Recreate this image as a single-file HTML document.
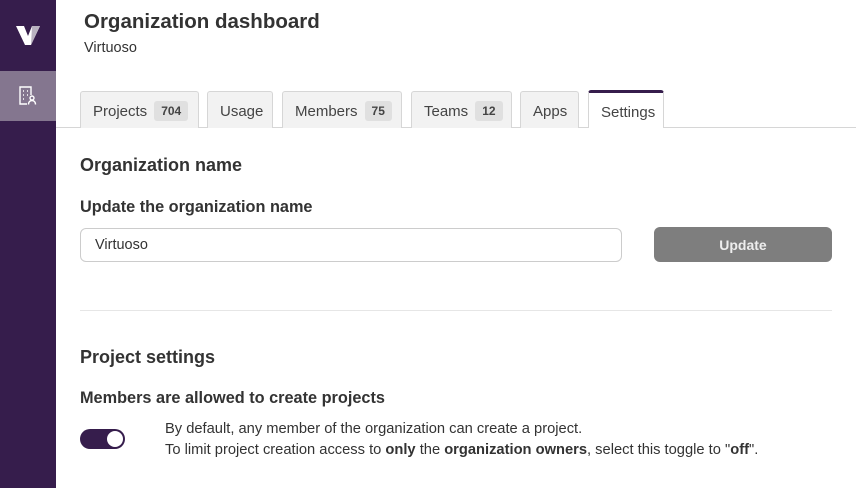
<!DOCTYPE html>
<html><head><style>
*{box-sizing:border-box;margin:0;padding:0}
body{width:856px;height:488px;overflow:hidden;background:#fff;font-family:"Liberation Sans",sans-serif;color:#333;position:relative}
.side{position:absolute;left:0;top:0;width:56px;height:488px;background:#361d4c}
.act{position:absolute;left:0;top:71px;width:56px;height:50px;background:#84768f}
.abs{position:absolute}
.tab{position:absolute;top:91px;height:37px;border:1px solid #d6d6d6;border-bottom:none;background:#f2f2f2;border-radius:3px 3px 0 0;font-size:15px;color:#444;padding-left:12px;line-height:40px}
.badge{display:inline-block;background:#e0e0e0;border-radius:3px;font-size:12px;font-weight:bold;padding:0 7px;line-height:20px;margin-left:7px;vertical-align:1px}
h2{font-size:18px;font-weight:bold;color:#333}
h3{font-size:16.3px;font-weight:bold;color:#333}
</style></head><body>
<div class="side"></div>
<div class="act"></div>
<svg class="abs" style="left:16px;top:26px" width="24" height="20" viewBox="0 0 24 20"><path d="M0 0h8l4 10 4-10h8l-9 19h-6z" fill="#fff"/><path d="M16 0h8l-9 19z" fill="#b9b2c0"/></svg>
<svg class="abs" style="left:19px;top:86px" width="19" height="20" viewBox="0 0 19 20" fill="none" stroke="#fff" stroke-width="1.4"><path d="M8 18H1V1h11v8"/><path d="M4 5h1M8 5h1M4 9h1M8 9h1M4 13h1"/><circle cx="13" cy="12" r="2"/><path d="M9.5 18.5c0-3 2-4 3.5-4s3.5 1 3.5 4"/></svg>
<div class="abs" style="left:84px;top:10px;font-size:20.5px;font-weight:bold;color:#333">Organization dashboard</div>
<div class="abs" style="left:84px;top:40px;font-size:14.5px;color:#333">Virtuoso</div>
<div class="abs" style="left:56px;top:127px;width:800px;height:1px;background:#d6d6d6"></div>
<div class="tab" style="left:80px;width:119px">Projects<span class="badge">704</span></div>
<div class="tab" style="left:207px;width:66px">Usage</div>
<div class="tab" style="left:282px;width:120px">Members<span class="badge">75</span></div>
<div class="tab" style="left:411px;width:101px">Teams<span class="badge">12</span></div>
<div class="tab" style="left:520px;width:59px">Apps</div>
<div class="tab" style="left:588px;top:90px;width:76px;height:38px;background:#fff;border-top:3px solid #361d4c">Settings</div>
<h2 class="abs" style="left:80px;top:155px">Organization name</h2>
<h3 class="abs" style="left:80px;top:198px">Update the organization name</h3>
<div class="abs" style="left:80px;top:228px;width:542px;height:34px;border:1px solid #ccc;border-radius:6px;font-size:14.5px;padding-left:14px;line-height:32px">Virtuoso</div>
<div class="abs" style="left:654px;top:227px;width:178px;height:35px;background:#7e7e7e;border-radius:6px;color:#eee;font-size:14px;font-weight:bold;text-align:center;line-height:36px">Update</div>
<div class="abs" style="left:80px;top:310px;width:752px;height:1px;background:#e6e6e6"></div>
<h2 class="abs" style="left:80px;top:347px">Project settings</h2>
<h3 class="abs" style="left:80px;top:389px">Members are allowed to create projects</h3>
<div class="abs" style="left:80px;top:429px;width:45px;height:20px;border-radius:10px;background:#361d4c"></div>
<div class="abs" style="left:107px;top:431px;width:16px;height:16px;border-radius:50%;background:#fff"></div>
<div class="abs" style="left:165px;top:419px;font-size:14.7px;line-height:21px;color:#333">By default, any member of the organization can create a project.<br>To limit project creation access to <b>only</b> the <b>organization owners</b>, select this toggle to "<b>off</b>".</div>
</body></html>
